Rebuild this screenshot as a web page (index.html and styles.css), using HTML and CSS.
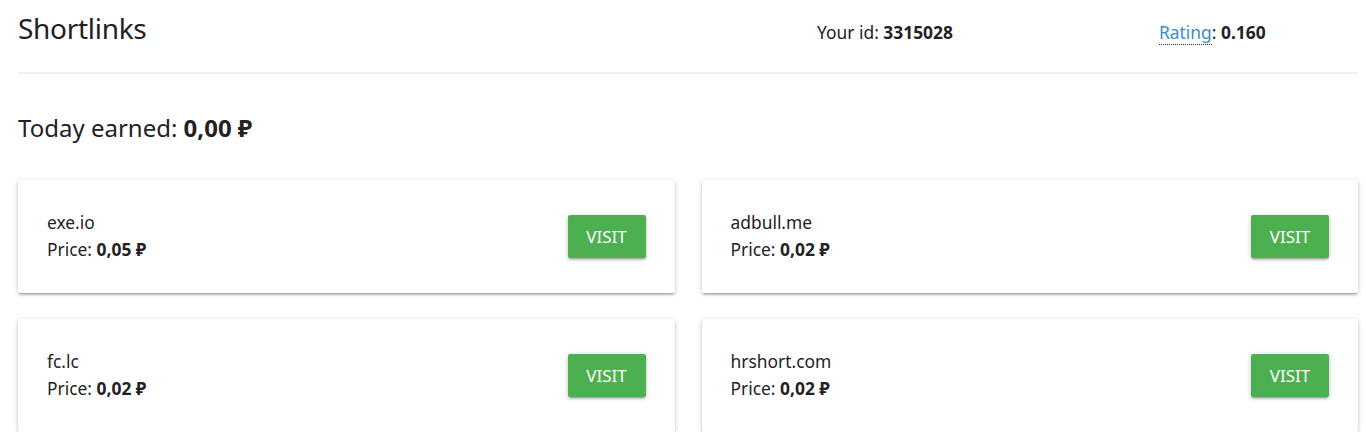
FILE: index.html
```html
<!DOCTYPE html>
<html lang="en">
<head>
  <meta charset="UTF-8">
  <title>Shortlinks</title>
  <link rel="stylesheet" href="styles.css">
</head>
<body>

  <div class="page">
    <div class="top">
      <h1 class="title">Shortlinks</h1>
      <div class="info id-info">Your id: <b>3315028</b></div>
      <div class="info rating-info"><abbr class="rating-link" title="Rating">Rating</abbr>: <b>0.160</b></div>
    </div>

    <hr class="sep">

    <h2 class="earned">Today earned: <b>0,00 &#8381;</b></h2>

    <div class="links">
      <div class="card">
        <div class="card-text">
          <div class="name">exe.io</div>
          <div>Price: <b>0,05 &#8381;</b></div>
        </div>
        <a class="btn">VISIT</a>
      </div>
      <div class="card">
        <div class="card-text">
          <div class="name">adbull.me</div>
          <div>Price: <b>0,02 &#8381;</b></div>
        </div>
        <a class="btn">VISIT</a>
      </div>
      <div class="card">
        <div class="card-text">
          <div class="name">fc.lc</div>
          <div>Price: <b>0,02 &#8381;</b></div>
        </div>
        <a class="btn">VISIT</a>
      </div>
      <div class="card">
        <div class="card-text">
          <div class="name">hrshort.com</div>
          <div>Price: <b>0,02 &#8381;</b></div>
        </div>
        <a class="btn">VISIT</a>
      </div>
    </div>
  </div>

</body>
</html>
```

FILE: styles.css
```css
body {
  font-family: "Noto Sans", "Open Sans", sans-serif;
  color: #222;
  margin: 0;
  background: #fff;
}
.page {
  padding: 0 8px 0 18px;
}
.top {
  display: flex;
  align-items: center;
  height: 56px;
}
.title {
  font-size: 28px;
  font-weight: 400;
  margin: 0;
  width: 799px;
  letter-spacing: -0.3px;
}
.info {
  font-size: 17.4px;
}
.id-info {
  width: 342px;
  padding-top: 8px;
}
.rating-info {
  padding-top: 8px;
}
.rating-link {
  color: #3b8fc4;
  text-decoration: none;
  border-bottom: 1px dotted #333;
}
.sep {
  border: 0;
  border-top: 2px solid #eee;
  margin: 16px 0 0;
}
.earned {
  font-size: 24px;
  font-weight: 400;
  margin: 38px 0 0;
  line-height: 32px;
}
.links {
  display: grid;
  grid-template-columns: 1fr 1fr;
  column-gap: 27px;
  row-gap: 26px;
  margin-top: 36px;
}
.card {
  display: flex;
  align-items: center;
  justify-content: space-between;
  height: 113px;
  padding: 0 29px;
  box-shadow: 0 2px 2px 0 rgba(0,0,0,0.14), 0 3px 1px -2px rgba(0,0,0,0.12), 0 1px 5px 0 rgba(0,0,0,0.2);
  border-radius: 2px;
  box-sizing: border-box;
  font-size: 17.4px;
  line-height: 27px;
}
.card-text {
  margin-top: -2px;
}
.btn {
  background: #4caf50;
  color: #fff;
  font-size: 17px;
  width: 78px;
  height: 43px;
  line-height: 43px;
  text-align: center;
  border-radius: 2px;
  box-shadow: 0 2px 2px 0 rgba(0,0,0,0.14), 0 3px 1px -2px rgba(0,0,0,0.12), 0 1px 5px 0 rgba(0,0,0,0.2);
}
```
